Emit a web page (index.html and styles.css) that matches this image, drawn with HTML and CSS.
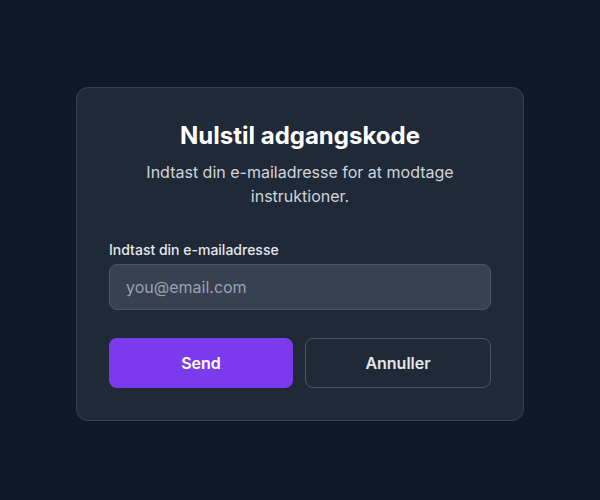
FILE: index.html
```html
<!DOCTYPE html>
<html lang="da">
<head>
<meta charset="utf-8">
<title>Nulstil adgangskode</title>
<link rel="stylesheet" href="styles.css">
</head>
<body>
<main class="page">
  <form class="card">
    <h1 class="title">Nulstil adgangskode</h1>
    <p class="subtitle">Indtast din e-mailadresse for at modtage instruktioner.</p>
    <label class="label" for="email">Indtast din e-mailadresse</label>
    <input class="input" id="email" type="email" placeholder="you@email.com">
    <div class="actions">
      <button type="button" class="btn btn-primary">Send</button>
      <button type="button" class="btn btn-secondary">Annuller</button>
    </div>
  </form>
</main>
</body>
</html>
```

FILE: styles.css
```css
* { box-sizing: border-box; }
html, body { margin: 0; padding: 0; }
body {
  background: #111827;
  font-family: Inter, "Noto Sans", sans-serif;
  color: #f9fafb;
}
.page {
  min-height: 500px;
  padding-top: 8px;
  display: flex;
  align-items: center;
  justify-content: center;
}
.card {
  width: 448px;
  background: #1f2937;
  border: 1px solid #374151;
  border-radius: 12px;
  padding: 32px;
  display: flex;
  flex-direction: column;
}
.title {
  margin: 0;
  font-size: 24px;
  line-height: 32px;
  font-weight: 700;
  text-align: center;
  color: #ffffff;
}
.subtitle {
  margin: 8px 0 0;
  font-size: 16px;
  line-height: 24px;
  text-align: center;
  color: #d1d5db;
}
.label {
  margin-top: 32px;
  font-size: 14px;
  line-height: 20px;
  font-weight: 500;
  color: #e5e7eb;
}
.input {
  margin-top: 4px;
  height: 46px;
  padding: 0 16px;
  background: #374151;
  border: 1px solid #4b5563;
  border-radius: 8px;
  font-family: inherit;
  font-size: 16px;
  color: #f9fafb;
  outline: none;
}
.input::placeholder { color: #9ca3af; }
.actions {
  margin-top: 28px;
  display: flex;
  gap: 12px;
}
.btn {
  flex: 1;
  padding: 12px 16px;
  font-family: inherit;
  font-size: 16px;
  line-height: 24px;
  font-weight: 600;
  border-radius: 8px;
  cursor: pointer;
}
.btn-primary {
  background: #7c3aed;
  color: #ffffff;
  border: none;
}
.btn-secondary {
  background: transparent;
  color: #e5e7eb;
  border: 1px solid #4b5563;
}
```
